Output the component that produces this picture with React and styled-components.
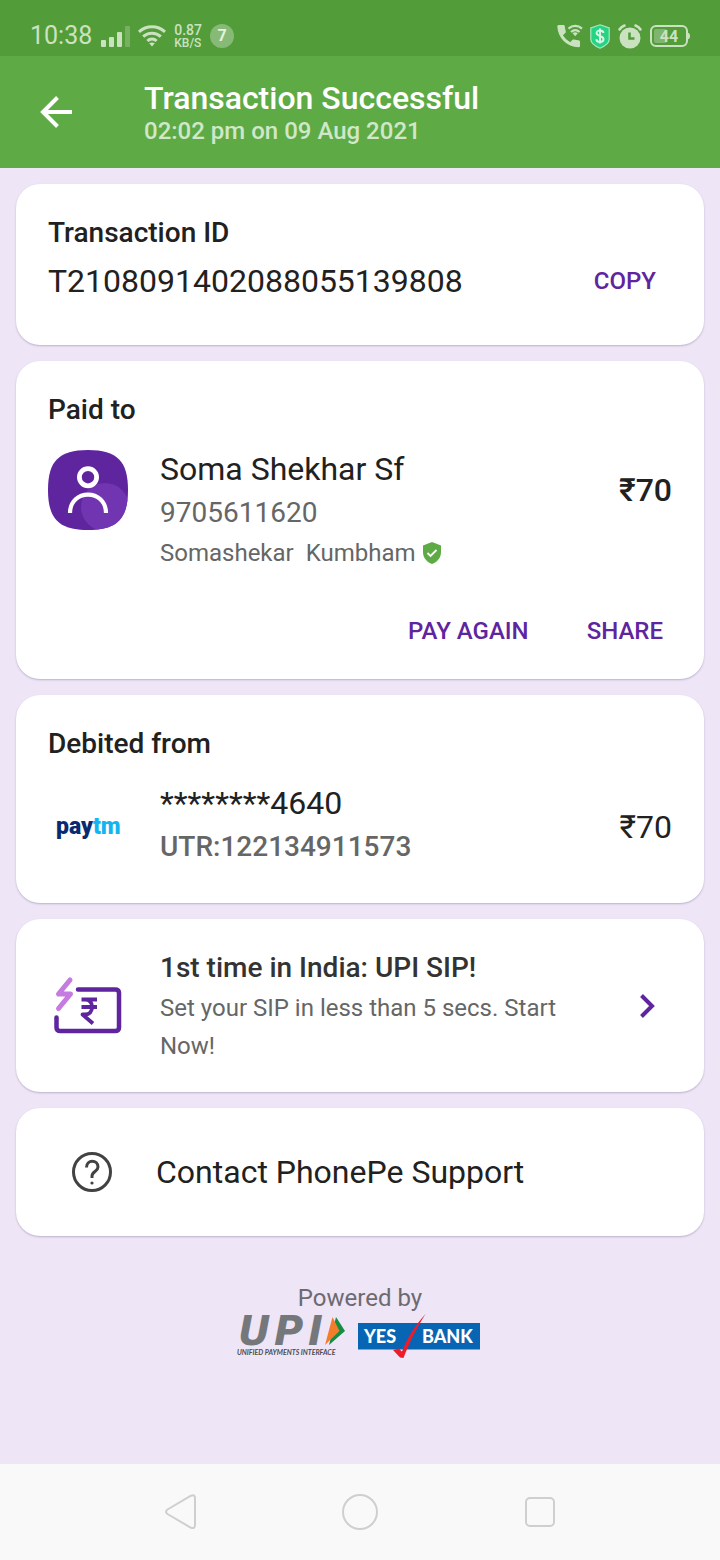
import React from 'react';
import styled, { createGlobalStyle } from 'styled-components';

const color = {
  green: '#5eab46',
  greenDark: '#529c3a',
  status: '#cbe2c1',
  lilac: '#eee5f7',
  purple: '#5f259f',
  ink: '#212121',
  muted: '#666666',
};

const GlobalStyle = createGlobalStyle`
  *, *::before, *::after { box-sizing: border-box; }
  body {
    margin: 0;
    background: ${color.lilac};
    color: ${color.ink};
    font-family: Roboto, "Noto Sans", sans-serif;
  }
  h1, h2, h3, p { margin: 0; font-weight: 400; }
  svg { display: block; flex: none; overflow: visible; }
  button { font: inherit; color: inherit; background: none; border: 0; padding: 0; cursor: pointer; }
`;

const Screen = styled.div`
  min-height: 100vh;
  display: flex;
  flex-direction: column;
`;

const StatusBar = styled.div`
  display: flex;
  align-items: flex-end;
  justify-content: space-between;
  height: 56px;
  padding: 0 30px 6px;
  background: ${color.greenDark};
  color: ${color.status};
`;

const StatusGroup = styled.div`
  display: flex;
  align-items: center;
  gap: ${(p) => p.$gap}px;
  height: 28px;
`;

const Clock = styled.span`
  font-size: 25px;
  line-height: 28px;
`;

const NetSpeed = styled.span`
  display: flex;
  flex-direction: column;
  font-size: 14px;
  line-height: 13px;
  font-weight: 500;
`;

const SpeedUnit = styled.span`
  font-size: 12px;
  line-height: 12px;
`;

const CountBadge = styled.span`
  width: 24px;
  height: 24px;
  border-radius: 50%;
  background: #86ba76;
  color: #e4f1de;
  font-size: 16px;
  line-height: 24px;
  font-weight: 700;
  text-align: center;
`;

const Header = styled.header`
  display: flex;
  align-items: center;
  gap: 72px;
  height: 112px;
  padding: 0 40px;
  background: ${color.green};
  color: #fff;
`;

const Title = styled.h1`
  font-size: 32px;
  line-height: 38px;
  font-weight: 500;
`;

const Subtitle = styled.p`
  font-size: 24px;
  line-height: 28px;
  font-weight: 500;
  color: #d0e7c9;
`;

const Content = styled.main`
  flex: 1;
  display: flex;
  flex-direction: column;
  gap: 16px;
  padding: 16px;
`;

const Card = styled.section`
  padding: ${(p) => p.$pad || '32px'};
  border-radius: 24px;
  background: #fff;
  box-shadow: 0 1px 2px rgba(60, 40, 90, 0.28);
`;

const CardTitle = styled.h2`
  font-size: 28px;
  line-height: 34px;
  font-weight: 500;
`;

const Row = styled.div`
  display: flex;
  align-items: ${(p) => p.$align || 'flex-start'};
  gap: 32px;
  margin-top: ${(p) => p.$top || 0}px;
`;

const Slot = styled.div`
  flex: none;
  display: flex;
  align-items: center;
  justify-content: center;
  width: 80px;
  height: 80px;
`;

const Details = styled.div`
  flex: 1;
  min-width: 0;
  display: flex;
  flex-direction: column;
  gap: ${(p) => p.$gap || 5}px;
`;

const Primary = styled.p`
  flex: ${(p) => (p.$grow ? 1 : 'none')};
  font-size: 32px;
  line-height: 38px;
`;

const Secondary = styled.p`
  font-size: 28px;
  line-height: 40px;
  font-weight: ${(p) => p.$weight || 400};
  color: ${color.muted};
`;

const Verified = styled.p`
  display: flex;
  align-items: center;
  gap: 7px;
  font-size: 24px;
  line-height: 30px;
  color: ${color.muted};
  white-space: pre;
`;

const Amount = styled.p`
  font-size: 32px;
  line-height: 80px;
  font-weight: ${(p) => p.$weight || 400};
`;

const Actions = styled.div`
  display: flex;
  justify-content: flex-end;
  gap: 58px;
  margin-top: 39px;
  padding-right: 9px;
`;

const TextButton = styled.button`
  && {
    padding-right: ${(p) => p.$inset || 0}px;
    font-size: 24px;
    line-height: 48px;
    font-weight: 500;
    color: ${color.purple};
  }
`;

const PromoTitle = styled.h3`
  font-size: 28px;
  line-height: 34px;
  font-weight: 500;
  color: #333;
`;

const PromoText = styled.p`
  max-width: 420px;
  font-size: 24px;
  line-height: 38px;
  color: ${color.muted};
`;

const IconButton = styled.button`
  display: flex;
  align-items: center;
  justify-content: center;
`;

const SupportButton = styled.button`
  && {
    display: flex;
    align-items: center;
    gap: 44px;
    width: 100%;
    padding: 0 24px;
    font-size: 32px;
    line-height: 40px;
    text-align: left;
  }
`;

const Powered = styled.footer`
  display: flex;
  flex-direction: column;
  align-items: center;
  padding-top: 32px;
  font-size: 24px;
  line-height: 28px;
  color: #6d6a70;
`;

const Logos = styled.div`
  display: flex;
  gap: 10px;
  margin-top: 1px;
`;

const NavBar = styled.nav`
  display: flex;
  align-items: center;
  justify-content: center;
  height: 96px;
  background: #f9f9f9;
`;

const NavButton = styled.button`
  display: flex;
  justify-content: center;
  width: 25%;
`;

const SignalIcon = () => (
  <svg width="30" height="21" viewBox="0 0 30 21" fill={color.status} aria-hidden="true">
    <rect x="1" y="14" width="5" height="7" rx="1" />
    <rect x="9" y="11" width="5" height="10" rx="1" />
    <rect x="17" y="6" width="5" height="15" rx="1" />
    <rect x="25" y="0" width="5" height="21" rx="1" opacity="0.3" />
  </svg>
);

const WifiIcon = () => (
  <svg width="28" height="22" viewBox="0 0 28 22" fill="none" stroke={color.status} strokeWidth="3" aria-hidden="true">
    <path d="M1 6.8C8.5 0 19.500 0 27 6.800" />
    <path d="M5.200 11.600C10 7 18 7 22.800 11.600" />
    <path d="M9.400 16C12 13.300 16 13.300 18.600 16" />
    <path d="M11.200 18.200C13 17.200 15 17.200 16.800 18.200L14 21.500z" fill={color.status} stroke="none" />
  </svg>
);

const CallIcon = () => (
  <svg width="26" height="24" viewBox="0 0 26 24" fill={color.status} aria-hidden="true">
    <path d="M1.500 1H6.500Q7.700 1 7.800 2.300Q8 5 8.800 7.300Q9 8.200 8.300 9L5.900 11.200Q8.600 15.800 13.200 18.200L15.500 15.800Q16.200 15.200 17.100 15.500Q19.200 16.200 21.700 16.300Q23 16.500 23 17.700V22Q23 23.400 21.600 23.300C9.500 22.600 1 14 0.300 2.400Q0.200 1.100 1.500 1z" />
    <g fill="none" stroke={color.status} strokeWidth="2.200">
      <path d="M11.500 4.600C15.500 1 21 1 25 4.600" />
      <path d="M14 8C16.600 5.700 20 5.700 22.600 8" />
    </g>
    <path d="M15.600 9.300Q18.200 7.400 20.800 9.300L18.200 12.200z" />
  </svg>
);

const ShieldIcon = () => (
  <svg width="20" height="25" viewBox="0 0 20 25" aria-hidden="true">
    <path d="M10 0.800L19.200 4V15.500C19.200 19.500 15 22 10 24.200C5 22 0.800 19.500 0.800 15.500V4z" fill="#25d483" stroke="#a9e8c6" strokeWidth="1.200" />
    <path d="M13.400 9C13.400 5.500 6.600 5.500 6.600 9C6.600 12.500 13.500 11.500 13.500 15.200C13.500 18.800 6.400 18.800 6.400 15.200M10 4.500V19.500" fill="none" stroke="#d6f5e3" strokeWidth="2" />
  </svg>
);

const AlarmIcon = () => (
  <svg width="26" height="25" viewBox="0 0 26 25" fill="none" stroke={color.status} aria-hidden="true">
    <circle cx="13" cy="14" r="10.500" fill={color.status} stroke="none" />
    <path d="M2.500 5.500Q4 3 7.500 1.500M23.500 5.500Q22 3 18.500 1.500" strokeWidth="2.600" strokeLinecap="round" />
    <path d="M12.500 8.500V14.500H17.500" stroke={color.greenDark} strokeWidth="2.600" />
  </svg>
);

const BatteryIcon = () => (
  <svg width="40" height="22" viewBox="0 0 40 22" role="img" aria-label="Battery 44 percent">
    <rect x="1" y="1" width="36" height="20" rx="5" fill="none" stroke={color.status} strokeWidth="2" />
    <rect x="4" y="4" width="13" height="14" rx="2" fill="#7fb56e" />
    <path d="M37.500 7.500Q40 8 40 11T37.500 14.500z" fill={color.status} />
    <text x="19" y="17" fontSize="16" fontWeight="700" textAnchor="middle" fill={color.status}>44</text>
  </svg>
);

const BackIcon = () => (
  <svg width="32" height="32" viewBox="0 0 32 32" fill="none" stroke="#fff" strokeWidth="4" aria-hidden="true">
    <path d="M32 16H4M17.500 1.500L3 16L17.500 30.500" />
  </svg>
);

const Avatar = () => (
  <svg width="80" height="80" viewBox="0 0 80 80" role="img" aria-label="Contact">
    <defs>
      <clipPath id="squircle">
        <path d="M40 0C69 0 80 11 80 40S69 80 40 80S0 69 0 40S11 0 40 0z" />
      </clipPath>
    </defs>
    <g clipPath="url(#squircle)">
      <rect width="80" height="80" fill="#5f259f" />
      <circle cx="57" cy="57" r="24" fill="#7135b1" />
    </g>
    <g fill="none" stroke="#fff">
      <circle cx="40" cy="27.200" r="8.600" strokeWidth="4.800" />
      <path d="M22 63C22 38.500 58 38.500 58 63" strokeWidth="4.200" />
    </g>
  </svg>
);

const VerifiedIcon = () => (
  <svg width="20" height="22" viewBox="0 0 20 22" role="img" aria-label="Verified">
    <path d="M9 0L18 3.500V10C18 16 14 20 9 22C4 20 0 16 0 10V3.500z" fill={color.green} />
    <path d="M4.500 11L7.500 14L13.500 8" fill="none" stroke="#fff" strokeWidth="1.800" />
  </svg>
);

const PaytmLogo = () => (
  <svg width="66" height="30" viewBox="0 0 66 30" role="img" aria-label="Paytm">
    <text x="1" y="22" fontSize="23" fontWeight="900" fill="#082a70">
      pay<tspan fill="#12b5f0">tm</tspan>
    </text>
  </svg>
);

const SipIcon = () => (
  <svg width="72" height="62" viewBox="0 0 72 62" fill="none" aria-hidden="true">
    <path d="M26 12.500H63Q67 12.500 67 16V50.500Q67 54 63 54H8.500Q4.500 54 4.500 50.500V40.500" stroke={color.purple} strokeWidth="4.500" strokeLinecap="round" />
    <path d="M18 3L6.500 17H18.500L6.500 31.500" stroke="#c57be0" strokeWidth="5" strokeLinecap="round" strokeLinejoin="round" />
    <path d="M29.500 22.500H45M29.500 30H45M29.500 22.500H33C42.500 22.500 42.500 37.500 33 37.500H30.500L41 46.500" stroke={color.purple} strokeWidth="3.800" strokeLinejoin="round" />
  </svg>
);

const ChevronIcon = () => (
  <svg width="17" height="28" viewBox="0 0 17 28" fill="none" aria-hidden="true">
    <path d="M2.500 1.500L13 12L2.500 22.500" stroke={color.purple} strokeWidth="4" />
  </svg>
);

const HelpIcon = () => (
  <svg width="40" height="40" viewBox="0 0 40 40" fill="none" stroke="#424242" aria-hidden="true">
    <circle cx="20" cy="20" r="18.500" strokeWidth="3" />
    <path d="M14.500 15.500C14.500 7 26 7.500 26 15C26 19.500 20 19.500 20 24V26" strokeWidth="3" />
    <circle cx="20" cy="31" r="1.600" fill="#424242" stroke="none" />
  </svg>
);

const UpiLogo = () => (
  <svg width="110" height="46" viewBox="0 0 110 46" role="img" aria-label="UPI, Unified Payments Interface">
    <text x="1 37 71" y="32" fontFamily='"DejaVu Sans", sans-serif' fontSize="40" fontWeight="700" fontStyle="italic" fill="#75787b">UPI</text>
    <path d="M99 4L108 18L92 32z" fill="#168b43" />
    <path d="M95.500 4L102.500 18L88 32z" fill="#f47d2b" />
    <text x="0" y="42" fontFamily="Lato, sans-serif" fontSize="7" fontWeight="700" fontStyle="italic" fill="#4b4b4d">UNIFIED PAYMENTS INTERFACE</text>
  </svg>
);

const YesBankLogo = () => (
  <svg width="126" height="46" viewBox="0 0 126 46" role="img" aria-label="Yes Bank">
    <rect x="1" y="10" width="122" height="26.500" fill="#0865b3" />
    <g fontFamily='Lato, "Open Sans", sans-serif' fontSize="18" fontWeight="900" fill="#fff">
      <text x="7" y="30">YES</text>
      <text x="65" y="30">BANK</text>
    </g>
    <path d="M68.500 1C59 16 53 28 46.500 45L43 44.500L36 37Q39 36 42 35.500Q44 38 45 38.500C51 24 57 14 68.500 1z" fill="#ed1c2b" />
  </svg>
);

export default function App() {
  return (
    <Screen>
      <GlobalStyle />
      <StatusBar>
        <StatusGroup $gap={8}>
          <Clock>10:38</Clock>
          <SignalIcon />
          <WifiIcon />
          <NetSpeed>
            0.87
            <SpeedUnit>KB/S</SpeedUnit>
          </NetSpeed>
          <CountBadge>7</CountBadge>
        </StatusGroup>
        <StatusGroup $gap={7}>
          <CallIcon />
          <ShieldIcon />
          <AlarmIcon />
          <BatteryIcon />
        </StatusGroup>
      </StatusBar>

      <Header>
        <IconButton aria-label="Back"><BackIcon /></IconButton>
        <div>
          <Title>Transaction Successful</Title>
          <Subtitle>02:02 pm on 09 Aug 2021</Subtitle>
        </div>
      </Header>

      <Content>
        <Card $pad="32px 32px 40px">
          <CardTitle>Transaction ID</CardTitle>
          <Row $align="center" $top={7}>
            <Primary $grow>T2108091402088055139808</Primary>
            <TextButton $inset={16}>COPY</TextButton>
          </Row>
        </Card>

        <Card $pad="32px 32px 24px">
          <CardTitle>Paid to</CardTitle>
          <Row $top={23}>
            <Avatar />
            <Details>
              <Primary>Soma Shekhar Sf</Primary>
              <Secondary>9705611620</Secondary>
              <Verified>{'Somashekar  Kumbham'}<VerifiedIcon /></Verified>
            </Details>
            <Amount $weight={500}>₹70</Amount>
          </Row>
          <Actions>
            <TextButton>PAY AGAIN</TextButton>
            <TextButton>SHARE</TextButton>
          </Actions>
        </Card>

        <Card $pad="32px 32px 36px">
          <CardTitle>Debited from</CardTitle>
          <Row $align="flex-end" $top={23}>
            <Slot><PaytmLogo /></Slot>
            <Details>
              <Primary>********4640</Primary>
              <Secondary $weight={500}>UTR:122134911573</Secondary>
            </Details>
            <Amount>₹70</Amount>
          </Row>
        </Card>

        <Card $pad="32px 48px 27px 32px">
          <Row $align="center">
            <Slot><SipIcon /></Slot>
            <Details $gap={4}>
              <PromoTitle>1st time in India: UPI SIP!</PromoTitle>
              <PromoText>Set your SIP in less than 5 secs. Start Now!</PromoText>
            </Details>
            <IconButton aria-label="Start a UPI SIP"><ChevronIcon /></IconButton>
          </Row>
        </Card>

        <Card $pad="44px 32px">
          <SupportButton>
            <HelpIcon />
            Contact PhonePe Support
          </SupportButton>
        </Card>

        <Powered>
          Powered by
          <Logos>
            <UpiLogo />
            <YesBankLogo />
          </Logos>
        </Powered>
      </Content>

      <NavBar>
        <NavButton aria-label="Back">
          <svg width="36" height="36" viewBox="0 0 36 36" fill="none" stroke="#cfcfcf" strokeWidth="2">
            <path d="M5.500 15.500L28.500 2Q33 0 33 4V31Q33 35.500 28.500 33.500L5.500 20Q2.500 18 5.500 15.500z" />
          </svg>
        </NavButton>
        <NavButton aria-label="Home">
          <svg width="36" height="36" viewBox="0 0 36 36" fill="none" stroke="#cfcfcf" strokeWidth="2">
            <circle cx="18" cy="18" r="17" />
          </svg>
        </NavButton>
        <NavButton aria-label="Recent apps">
          <svg width="36" height="36" viewBox="0 0 36 36" fill="none" stroke="#cfcfcf" strokeWidth="2">
            <rect x="4" y="4" width="28" height="28" rx="4" />
          </svg>
        </NavButton>
      </NavBar>
    </Screen>
  );
}
